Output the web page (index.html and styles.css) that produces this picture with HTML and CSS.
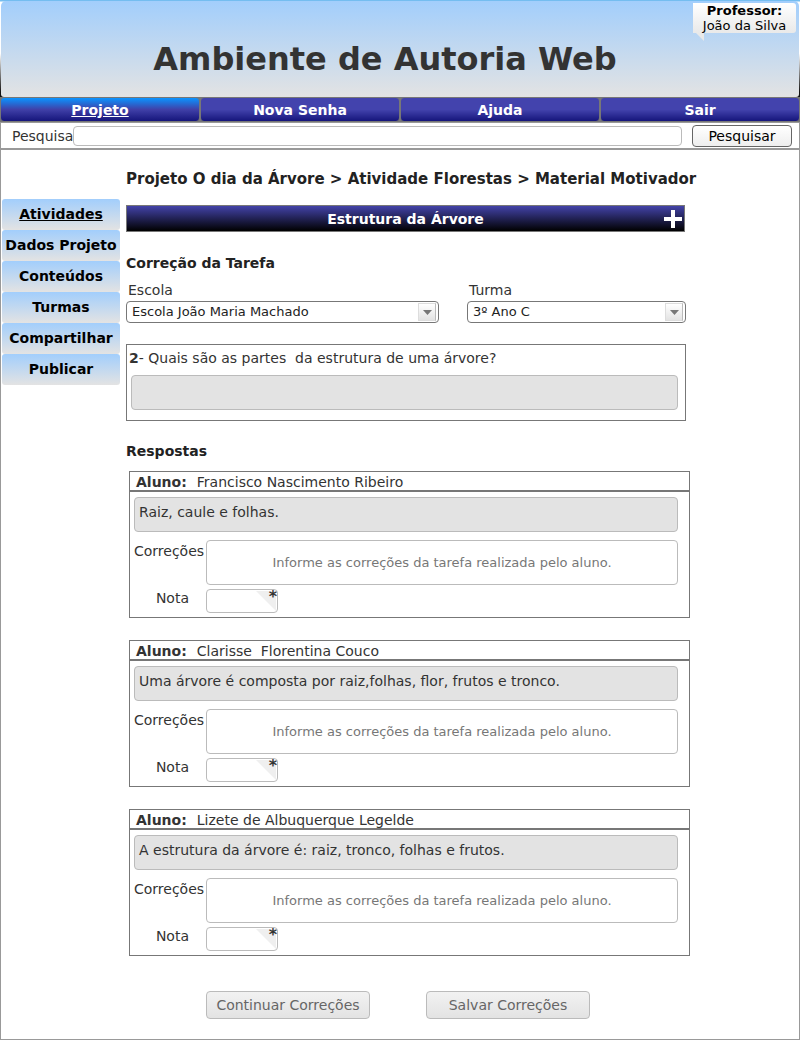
FILE: index.html
```html
<!DOCTYPE html>
<html lang="pt-BR">
<head>
<meta charset="utf-8">
<title>Ambiente de Autoria Web</title>
<link rel="stylesheet" href="styles.css">
</head>
<body>
<div class="page">
  <header class="banner">
    <div class="banner-inner">
      <h1 class="banner-title">Ambiente de Autoria Web</h1>
      <div class="user">
        <strong>Professor:</strong>
        <span>João da Silva</span>
        <svg class="user-tail" width="12" height="8" viewBox="0 0 12 8" aria-hidden="true"><path d="M3 0h8v8z" fill="#e9e9e9"/></svg>
      </div>
    </div>
  </header>
  <nav class="tabs">
    <a class="tab tab-active" href="#">Projeto</a>
    <a class="tab" href="#">Nova Senha</a>
    <a class="tab" href="#">Ajuda</a>
    <a class="tab" href="#">Sair</a>
  </nav>
  <div class="body">
    <form class="search">
      <label for="q">Pesquisa</label>
      <input class="box search-input" id="q" type="text">
      <button class="btn search-btn" type="button">Pesquisar</button>
    </form>
    <div class="layout">
      <nav class="side">
        <a class="side-link side-active" href="#">Atividades</a>
        <a class="side-link" href="#">Dados Projeto</a>
        <a class="side-link" href="#">Conteúdos</a>
        <a class="side-link" href="#">Turmas</a>
        <a class="side-link" href="#">Compartilhar</a>
        <a class="side-link" href="#">Publicar</a>
      </nav>
      <main class="content">
        <h2 class="crumbs">Projeto O dia da Árvore &gt; Atividade Florestas &gt; Material Motivador</h2>
        <button class="accordion" type="button">
          <span class="accordion-label">Estrutura da Árvore</span>
          <svg width="18" height="18" viewBox="0 0 18 18" aria-hidden="true"><path d="M7 0h4v7h7v4h-7v7H7v-7H0V7h7z" fill="#fff"/></svg>
        </button>
        <h3 class="heading">Correção da Tarefa</h3>
        <div class="filters">
          <div class="filter">
            <label for="escola">Escola</label>
            <div class="select-wrap">
              <select class="select" id="escola"><option>Escola João Maria Machado</option></select>
              <span class="arrow"><svg width="9" height="5" viewBox="0 0 9 5" aria-hidden="true"><path d="M0 0h9L4.500 5z" fill="#777"/></svg></span>
            </div>
          </div>
          <div class="filter">
            <label for="turma">Turma</label>
            <div class="select-wrap">
              <select class="select" id="turma"><option>3º Ano C</option></select>
              <span class="arrow"><svg width="9" height="5" viewBox="0 0 9 5" aria-hidden="true"><path d="M0 0h9L4.500 5z" fill="#777"/></svg></span>
            </div>
          </div>
        </div>
        <section class="question">
          <label class="question-text" for="resp"><b>2</b>- Quais são as partes&nbsp; da estrutura de uma árvore?</label>
          <input class="box question-input" id="resp" type="text" readonly>
        </section>
        <h3 class="heading heading-answers">Respostas</h3>
        <div class="cards">
          <section class="card">
            <div class="card-head"><b>Aluno:</b><span>Francisco Nascimento Ribeiro</span></div>
            <div class="card-body">
              <p class="box answer">Raiz, caule e folhas.</p>
              <label class="lbl" for="c1">Correções</label>
              <textarea class="box notes" id="c1" placeholder="Informe as correções da tarefa realizada pelo aluno."></textarea>
              <label class="lbl" for="n1">Nota</label>
              <span class="grade"><input class="box grade-input" id="n1" type="text"><svg class="corner" width="20" height="20" viewBox="0 0 20 20" aria-hidden="true"><path d="M0 0h20v20z" fill="#efefef"/></svg><b class="star">*</b></span>
            </div>
          </section>
          <section class="card">
            <div class="card-head"><b>Aluno:</b><span>Clarisse&nbsp; Florentina Couco</span></div>
            <div class="card-body">
              <p class="box answer">Uma árvore é composta por raiz,folhas, flor, frutos e tronco.</p>
              <label class="lbl" for="c2">Correções</label>
              <textarea class="box notes" id="c2" placeholder="Informe as correções da tarefa realizada pelo aluno."></textarea>
              <label class="lbl" for="n2">Nota</label>
              <span class="grade"><input class="box grade-input" id="n2" type="text"><svg class="corner" width="20" height="20" viewBox="0 0 20 20" aria-hidden="true"><path d="M0 0h20v20z" fill="#efefef"/></svg><b class="star">*</b></span>
            </div>
          </section>
          <section class="card">
            <div class="card-head"><b>Aluno:</b><span>Lizete de Albuquerque Legelde</span></div>
            <div class="card-body">
              <p class="box answer">A estrutura da árvore é: raiz, tronco, folhas e frutos.</p>
              <label class="lbl" for="c3">Correções</label>
              <textarea class="box notes" id="c3" placeholder="Informe as correções da tarefa realizada pelo aluno."></textarea>
              <label class="lbl" for="n3">Nota</label>
              <span class="grade"><input class="box grade-input" id="n3" type="text"><svg class="corner" width="20" height="20" viewBox="0 0 20 20" aria-hidden="true"><path d="M0 0h20v20z" fill="#efefef"/></svg><b class="star">*</b></span>
            </div>
          </section>
        </div>
        <div class="actions">
          <button class="btn action" type="button" disabled>Continuar Correções</button>
          <button class="btn action" type="button" disabled>Salvar Correções</button>
        </div>
      </main>
    </div>
  </div>
</div>
</body>
</html>
```
FILE: styles.css
```css
* { box-sizing: border-box; }
body {
  margin: 0;
  background: #fff;
  color: #333;
  font: 14px/18px Verdana, "DejaVu Sans", sans-serif;
}
h1, h2, h3, p { margin: 0; }
a { text-decoration: none; }
input, select, textarea, button { font: inherit; color: inherit; margin: 0; }

.page { display: flex; flex-direction: column; min-height: 100vh; }

.banner {
  padding: 1px 1px 0;
  background: linear-gradient(#74bdf0 1px, #fff 2px, #fff 55%, #111 95%);
}
.banner-inner {
  position: relative;
  display: flex;
  justify-content: center;
  padding: 38px 30px 18px 0;
  border-radius: 5px 5px 3px 3px;
  background: linear-gradient(#a2cefc, #e3e3e3);
}
.banner-title { font-size: 32px; line-height: 40px; }
.user {
  position: absolute;
  top: 2px;
  right: 3px;
  display: flex;
  flex-direction: column;
  width: 103px;
  border-radius: 0 3px 3px 0;
  background: linear-gradient(#fff, #e9e9e9);
  color: #000;
  font-size: 13px;
  line-height: 15px;
  text-align: center;
}
.user-tail { position: absolute; left: 0; top: 100%; }

.tabs { display: grid; grid-template-columns: repeat(4, 1fr); background: #777; }
.tab {
  height: 25px;
  border: 1px solid #777;
  border-radius: 4px;
  background: linear-gradient(#4343ad 50%, #15157b);
  color: #fff;
  font-weight: bold;
  line-height: 24px;
  text-align: center;
}
.tab-active { background: linear-gradient(#0b94ff, #4040a8 50%, #15157b); text-decoration: underline; }

.body { flex: 1; border: 1px solid #999; }
.search {
  display: flex;
  align-items: center;
  height: 27px;
  padding: 0 7px 0 11px;
  border-bottom: 2px solid #999;
}
.box { border: 1px solid #bbb; border-radius: 4px; background: #fff; outline: 0; }
.search-input { flex: 1; min-width: 0; height: 20px; }
.btn {
  border: 1px solid #666;
  border-radius: 4px;
  background: linear-gradient(#fff, #eee);
  color: #000;
}
.search-btn { width: 100px; height: 22px; margin-left: 10px; padding: 0; line-height: 20px; }

.layout { display: grid; grid-template-columns: 118px 1fr; gap: 6px; padding: 19px 109px 20px 1px; }
.side { display: flex; flex-direction: column; margin-top: 30px; }
.side-link {
  height: 31px;
  border-radius: 3px;
  background: linear-gradient(#a2cefc, #e3e3e3);
  color: #000;
  font-weight: bold;
  line-height: 31px;
  text-align: center;
  white-space: nowrap;
}
.side-active { text-decoration: underline; }

.content { min-width: 0; color: #333; }
.crumbs { color: #222; font-size: 15px; line-height: 20px; white-space: nowrap; }
.accordion {
  display: flex;
  align-items: center;
  width: calc(100% - 5px);
  height: 27px;
  margin-top: 16px;
  padding: 0 2px 0 20px;
  border: 1px solid #777;
  background: linear-gradient(#4343a8, #000);
  color: #fff;
  font-weight: bold;
}
.accordion-label { flex: 1; }
.heading { margin-top: 22px; color: #222; font-size: 14px; line-height: 18px; }

.filters { display: grid; grid-template-columns: 313fr 219fr; gap: 28px; margin: 9px 4px 0 0; }
.filter label { display: block; padding-left: 2px; }
.select-wrap { position: relative; margin-top: 2px; }
.select {
  display: block;
  width: 100%;
  height: 22px;
  padding: 0 24px 0 5px;
  border: 1px solid #777;
  border-radius: 4px;
  background: #fff;
  color: #222;
  font-size: 13px;
  appearance: none;
}
.arrow {
  position: absolute;
  top: 2px;
  right: 3px;
  display: flex;
  align-items: center;
  justify-content: center;
  width: 18px;
  height: 18px;
  border: 1px solid #ddd;
  border-right-color: #bbb;
  background: linear-gradient(#fff, #e3e3e3);
  pointer-events: none;
}

.question { margin: 21px 4px 0 0; padding: 4px 7px 10px 4px; border: 1px solid #777; }
.question-text { display: block; margin-left: -2px; }
.question-input { display: block; width: 100%; height: 35px; margin-top: 8px; background: #e3e3e3; }
.heading-answers { margin-top: 21px; }

.cards { display: grid; gap: 22px; margin: 11px 0 0 3px; }
.card { border: 1px solid #777; }
.card-head { display: flex; gap: 10px; height: 20px; padding: 1px 6px; border-bottom: 2px solid #777; }
.card-body {
  display: grid;
  grid-template-columns: 72px 1fr;
  align-content: start;
  row-gap: 4px;
  padding: 5px 11px 4px 4px;
}
.answer {
  grid-column: 1 / 3;
  height: 35px;
  margin-bottom: 4px;
  padding: 5px 4px;
  background: #e3e3e3;
}
.lbl { padding-top: 2px; }
.lbl[for^="n"] { padding: 0 17px 0 0; text-align: right; }
.notes {
  display: block;
  width: 100%;
  height: 45px;
  padding: 13px 0 0;
  font-size: 13px;
  text-align: center;
  resize: none;
}
.notes::placeholder { color: #777; opacity: 1; }
.grade { position: relative; width: 72px; height: 24px; }
.grade-input { display: block; width: 100%; height: 24px; }
.corner { position: absolute; top: 2px; right: 2px; }
.star { position: absolute; top: 0; right: 1px; font-size: 16px; line-height: 16px; }

.actions { display: flex; gap: 56px; margin: 35px 0 0 80px; }
.action {
  width: 164px;
  height: 28px;
  padding: 0;
  border-color: #bbb;
  background: linear-gradient(#f2f2f2, #e3e3e3);
  color: #666;
}
```
